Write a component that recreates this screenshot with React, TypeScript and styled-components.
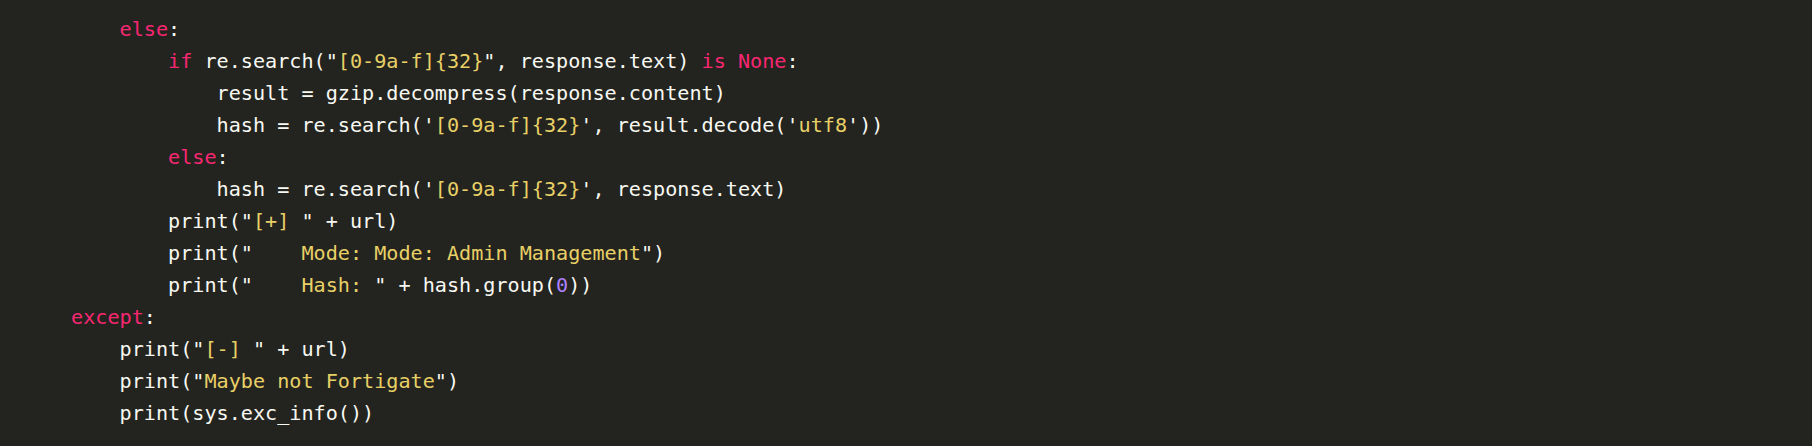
import React from "react";
import styled, { createGlobalStyle } from "styled-components";

const Global = createGlobalStyle`
  html, body {
    margin: 0;
    padding: 0;
    background: #23241f;
  }
`;

const Block = styled.pre`
  margin: 0;
  width: 1812px;
  height: 446px;
  box-sizing: border-box;
  padding: 13px 0 0 71px;
  background: #23241f;
  color: #f8f8f2;
  font-family: "DejaVu Sans Mono", "Liberation Mono", monospace;
  font-size: 20.15px;
  line-height: 32px;
  overflow: hidden;
`;

const Line = styled.div`
  white-space: pre;
  height: 32px;
`;

type Kind = "kw" | "str" | "num";

const Tok = styled.span<{ $k: Kind }>`
  color: ${(p) =>
    p.$k === "kw" ? "#f92672" : p.$k === "str" ? "#e8d066" : "#ae81ff"};
`;

const K = ({ c }: { c: string }) => <Tok $k="kw">{c}</Tok>;
const S = ({ c }: { c: string }) => <Tok $k="str">{c}</Tok>;
const N = ({ c }: { c: string }) => <Tok $k="num">{c}</Tok>;

export default function App() {
  return (
    <>
      <Global />
      <Block>
        <Line>
          {"    "}
          <K c="else" />:
        </Line>
        <Line>
          {"        "}
          <K c="if" />
          {' re.search("'}
          <S c="[0-9a-f]{32}" />
          {'", response.text) '}
          <K c="is" /> <K c="None" />:
        </Line>
        <Line>{"            result = gzip.decompress(response.content)"}</Line>
        <Line>
          {"            hash = re.search('"}
          <S c="[0-9a-f]{32}" />
          {"', result.decode('"}
          <S c="utf8" />
          {"'))"}
        </Line>
        <Line>
          {"        "}
          <K c="else" />:
        </Line>
        <Line>
          {"            hash = re.search('"}
          <S c="[0-9a-f]{32}" />
          {"', response.text)"}
        </Line>
        <Line>
          {'        print("'}
          <S c="[+] " />
          {'" + url)'}
        </Line>
        <Line>
          {'        print("'}
          <S c="    Mode: Mode: Admin Management" />
          {'")'}
        </Line>
        <Line>
          {'        print("'}
          <S c="    Hash: " />
          {'" + hash.group('}
          <N c="0" />
          {"))"}
        </Line>
        <Line>
          <K c="except" />:
        </Line>
        <Line>
          {'    print("'}
          <S c="[-] " />
          {'" + url)'}
        </Line>
        <Line>
          {'    print("'}
          <S c="Maybe not Fortigate" />
          {'")'}
        </Line>
        <Line>{"    print(sys.exc_info())"}</Line>
      </Block>
    </>
  );
}
